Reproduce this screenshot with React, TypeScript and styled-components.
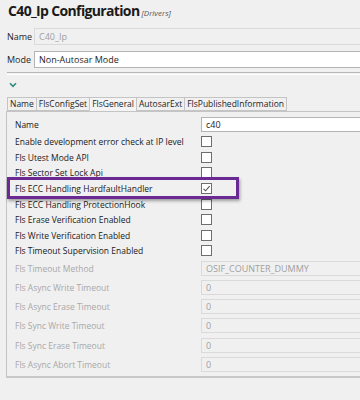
import { FunctionComponent } from 'react'
import styled, { createGlobalStyle } from 'styled-components'

const GlobalStyle = createGlobalStyle`
  html, body {
    margin: 0;
    padding: 0;
    background: #f0f0f0;
    overflow: hidden;
  }
  body {
    width: 360px;
    height: 400px;
    font-family: 'Open Sans', 'Noto Sans', sans-serif;
    color: #1e1e1e;
  }
`

const Page = styled.div`
  position: relative;
  width: 360px;
  height: 400px;
  overflow: hidden;
  background: #f0f0f0;
`

const TitleRow = styled.div`
  display: flex;
  align-items: baseline;
  gap: 2px;
  height: 26px;
  padding: 1px 0 0 8px;
  box-sizing: border-box;
`

const Title = styled.h1`
  margin: 0;
  font-size: 14px;
  font-weight: 700;
  letter-spacing: -0.65px;
  color: #1a1a1a;
`

const Subtitle = styled.span`
  font-size: 8px;
  font-style: italic;
  color: #555;
`

const HeaderForm = styled.div`
  display: grid;
  grid-template-columns: 27px 1fr;
  row-gap: 6px;
  padding: 2px 0 0 7px;
  align-items: center;
`

const HeaderLabel = styled.span`
  font-size: 9px;
  color: #1e1e1e;
`

const Field = styled.div<{ $disabled?: boolean }>`
  height: 17px;
  box-sizing: border-box;
  width: 400px;
  padding: 0 0 0 4px;
  display: flex;
  align-items: center;
  font-size: 9px;
  background: ${(p) => (p.$disabled ? '#f0f0f0' : '#ffffff')};
  border: 1px solid ${(p) => (p.$disabled ? '#dadada' : '#b4b4b4')};
  color: ${(p) => (p.$disabled ? '#a0a0a0' : '#1e1e1e')};
`

const Separator = styled.div`
  margin: 4px 0 0 7px;
  height: 1px;
  border-top: 1px solid #b8b8b8;
  border-bottom: 1px solid #ffffff;
`

const ChevronRow = styled.div`
  height: 22px;
  padding: 7px 0 0 9px;
  box-sizing: border-box;
  svg {
    display: block;
  }
`

const Tabs = styled.div`
  display: flex;
  margin: 0 0 0 7px;
  height: 14px;
`

const Tab = styled.div<{ $active?: boolean }>`
  box-sizing: border-box;
  height: 14px;
  padding: 0 2px;
  font-size: 8.5px;
  line-height: 12px;
  color: #1e1e1e;
  border: 1px solid #c4c4c4;
  border-bottom: ${(p) => (p.$active ? '1px solid #f4f4f4' : '1px solid #c4c4c4')};
  background: ${(p) => (p.$active ? '#f4f4f4' : '#f0f0f0')};
  margin-left: -1px;
  &:first-child {
    margin-left: 0;
  }
`

const Panel = styled.div`
  position: relative;
  margin-left: 6px;
  padding: 3px 0 2px 8px;
  border-left: 1px solid #c4c4c4;
  border-top: 1px solid #c4c4c4;
  border-bottom: 2px solid #c8c8c8;
  width: 400px;
  box-sizing: border-box;
`

const Row = styled.div<{ $height: number }>`
  display: grid;
  grid-template-columns: 186px 1fr;
  align-items: center;
  height: ${(p) => p.$height}px;
`

const RowLabel = styled.span<{ $disabled?: boolean }>`
  font-size: 8.5px;
  white-space: nowrap;
  color: ${(p) => (p.$disabled ? '#a8a8a8' : '#1a1a1a')};
`

const ValueField = styled(Field)`
  height: 15px;
`

const Box = styled.div`
  width: 11px;
  height: 11px;
  box-sizing: border-box;
  border: 1px solid #6e6e6e;
  background: #ffffff;
  display: flex;
  align-items: center;
  justify-content: center;
`

const Highlight = styled.div`
  position: absolute;
  left: 0;
  top: 65px;
  width: 232px;
  height: 22px;
  box-sizing: border-box;
  border: 3px solid #6a2a93;
  box-shadow: 1px 2px 3px rgba(0, 0, 0, 0.35);
  pointer-events: none;
`

const Checkbox: FunctionComponent<{ checked?: boolean }> = ({ checked }) => (
  <Box>
    {checked && (
      <svg width="9" height="9" viewBox="0 0 9 9">
        <path d="M1.5 4.8 L3.6 6.8 L7.6 2.2" fill="none" stroke="#555" strokeWidth="1.1" />
      </svg>
    )}
  </Box>
)

const checkRows = [
  { label: 'Enable development error check at IP level' },
  { label: 'Fls Utest Mode API' },
  { label: 'Fls Sector Set Lock Api' },
  { label: 'Fls ECC Handling HardfaultHandler', checked: true },
  { label: 'Fls ECC Handling ProtectionHook' },
  { label: 'Fls Erase Verification Enabled' },
  { label: 'Fls Write Verification Enabled' },
  { label: 'Fls Timeout Supervision Enabled' },
]

const disabledRows = [
  { label: 'Fls Timeout Method', value: 'OSIF_COUNTER_DUMMY' },
  { label: 'Fls Async Write Timeout', value: '0' },
  { label: 'Fls Async Erase Timeout', value: '0' },
  { label: 'Fls Sync Write Timeout', value: '0' },
  { label: 'Fls Sync Erase Timeout', value: '0' },
  { label: 'Fls Async Abort Timeout', value: '0' },
]

const tabs = ['Name', 'FlsConfigSet', 'FlsGeneral', 'AutosarExt', 'FlsPublishedInformation']

const App: FunctionComponent = () => (
  <Page>
    <GlobalStyle />
    <TitleRow>
      <Title>C40_Ip Configuration</Title>
      <Subtitle>[Drivers]</Subtitle>
    </TitleRow>
    <HeaderForm>
      <HeaderLabel>Name</HeaderLabel>
      <Field $disabled>C40_Ip</Field>
      <HeaderLabel>Mode</HeaderLabel>
      <Field>Non-Autosar Mode</Field>
    </HeaderForm>
    <Separator />
    <ChevronRow>
      <svg width="8" height="6" viewBox="0 0 8 6">
        <path d="M1 1.2 L4 4.4 L7 1.2" fill="none" stroke="#2b8c7e" strokeWidth="1.6" />
      </svg>
    </ChevronRow>
    <Tabs>
      {tabs.map((t) => (
        <Tab key={t} $active={t === 'FlsGeneral'}>
          {t}
        </Tab>
      ))}
    </Tabs>
    <Panel>
      <Row $height={19}>
        <RowLabel>Name</RowLabel>
        <ValueField>c40</ValueField>
      </Row>
      {checkRows.map((r) => (
        <Row key={r.label} $height={15.6}>
          <RowLabel>{r.label}</RowLabel>
          <Checkbox checked={r.checked} />
        </Row>
      ))}
      {disabledRows.map((r) => (
        <Row key={r.label} $height={19.2}>
          <RowLabel $disabled>{r.label}</RowLabel>
          <ValueField $disabled>{r.value}</ValueField>
        </Row>
      ))}
      <Highlight />
    </Panel>
  </Page>
)

export default App
